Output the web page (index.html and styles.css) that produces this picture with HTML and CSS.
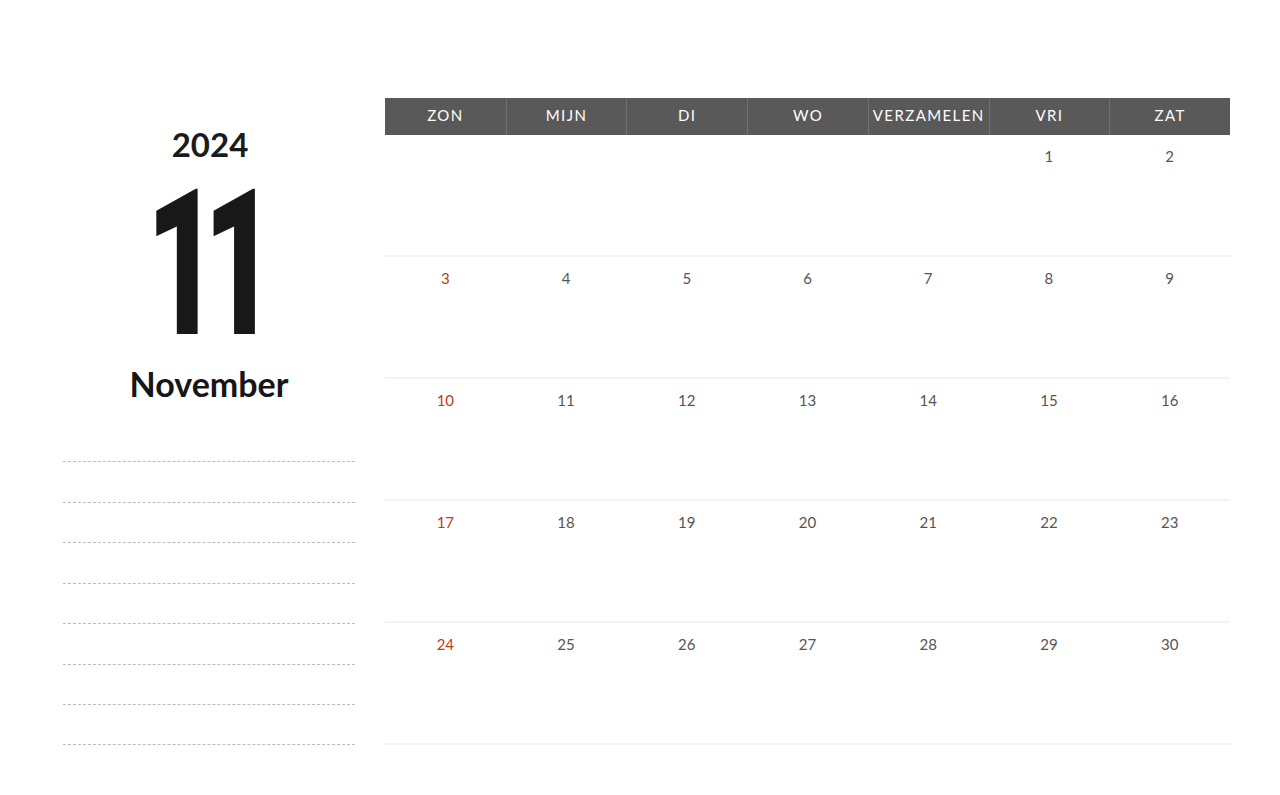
FILE: index.html
```html
<!DOCTYPE html>
<html lang="nl">
<head>
<meta charset="utf-8">
<title>November 2024</title>
<link rel="stylesheet" href="styles.css">
</head>
<body>
<div class="page">
  <aside class="side">
    <div class="year">2024</div>
    <div class="month-num">11</div>
    <div class="month-name">November</div>
    <div class="notes">
      <div class="note"></div><div class="note"></div><div class="note"></div><div class="note"></div>
      <div class="note"></div><div class="note"></div><div class="note"></div><div class="note"></div>
    </div>
  </aside>
  <main class="cal">
    <div class="head">
      <div class="hcell">ZON</div><div class="hcell">MIJN</div><div class="hcell">DI</div><div class="hcell">WO</div><div class="hcell">VERZAMELEN</div><div class="hcell">VRI</div><div class="hcell">ZAT</div>
    </div>
    <div class="week">
      <div class="day"></div><div class="day"></div><div class="day"></div><div class="day"></div><div class="day"></div><div class="day">1</div><div class="day">2</div>
    </div>
    <div class="week">
      <div class="day sun">3</div><div class="day">4</div><div class="day">5</div><div class="day">6</div><div class="day">7</div><div class="day">8</div><div class="day">9</div>
    </div>
    <div class="week">
      <div class="day sun">10</div><div class="day">11</div><div class="day">12</div><div class="day">13</div><div class="day">14</div><div class="day">15</div><div class="day">16</div>
    </div>
    <div class="week">
      <div class="day sun">17</div><div class="day">18</div><div class="day">19</div><div class="day">20</div><div class="day">21</div><div class="day">22</div><div class="day">23</div>
    </div>
    <div class="week">
      <div class="day sun">24</div><div class="day">25</div><div class="day">26</div><div class="day">27</div><div class="day">28</div><div class="day">29</div><div class="day">30</div>
    </div>
  </main>
</div>
</body>
</html>
```
FILE: styles.css
```css
* { box-sizing: border-box; }
html, body { margin: 0; padding: 0; background: #ffffff; }
body { font-family: "Lato", "Open Sans", sans-serif; color: #1a1a1a; }

.page {
  display: flex;
  align-items: flex-start;
  padding: 98px 0 0 63px;
  height: 795px;
  gap: 30px;
}

.side {
  width: 292px;
  padding-top: 30px;
  display: flex;
  flex-direction: column;
  align-items: center;
}
.year {
  font-size: 33px;
  line-height: 33px;
  font-weight: 700;
  color: #1b1b1b;
  margin-left: 2px;
}
.month-num {
  font-family: "Roboto", "Liberation Sans", sans-serif;
  font-size: 204px;
  line-height: 150px;
  height: 150px;
  font-weight: 900;
  color: #181818;
  letter-spacing: -26px;
  margin-top: 29px;
  margin-right: 12px;
  transform: scaleX(0.62);
}
.month-name {
  font-size: 34px;
  line-height: 34px;
  font-weight: 700;
  color: #161616;
  margin-top: 27px;
}
.notes {
  align-self: stretch;
  margin-top: 21px;
}
.note {
  height: 40.43px;
  border-bottom: 1px dashed #bcbcbc;
}

.cal {
  width: 845px;
}
.head {
  display: grid;
  grid-template-columns: repeat(7, 1fr);
  height: 37px;
  background: #595959;
}
.hcell {
  display: flex;
  align-items: center;
  justify-content: center;
  color: #ffffff;
  font-size: 15px;
  letter-spacing: 1.4px;
  font-weight: 400;
  padding-bottom: 3px;
  border-left: 1px solid #727272;
}
.hcell:first-child { border-left: none; }

.week {
  display: grid;
  grid-template-columns: repeat(7, 1fr);
  height: 122px;
  border-bottom: 2px solid #f3f3f3;
}
.day {
  text-align: center;
  font-size: 15px;
  line-height: 15px;
  padding-top: 14px;
  color: #555555;
}
.day.sun { color: #c2391c; }
```
